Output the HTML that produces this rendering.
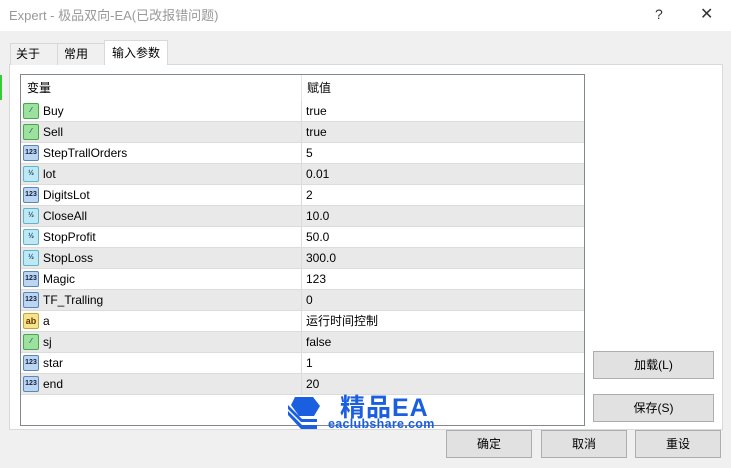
<!DOCTYPE html><html><head><meta charset="utf-8"><style>
*{margin:0;padding:0;box-sizing:border-box}
body{width:731px;height:468px;background:#f0f0f0;font-family:"Liberation Sans","Noto Sans CJK SC",sans-serif;font-size:12px;color:#000;position:relative;overflow:hidden}
.a{position:absolute}
.title{left:0;top:0;width:731px;height:31px;background:#fff;color:#999;font-size:13px;line-height:31px;padding-left:9px}
.tab{top:43px;height:22px;background:#f0f0f0;border:1px solid #d9d9d9;border-bottom:none;line-height:21px;padding-left:5px}
.panel{left:9px;top:64px;width:714px;height:366px;background:#fff;border:1px solid #d9d9d9}
.tbl{left:20px;top:74px;width:565px;height:352px;border:1px solid #828790;background:#fff}
.row{position:absolute;left:0;width:563px;height:21px;border-bottom:1px solid #dcdcdc;line-height:20px}
.row.g{background:#e9e9e9}
.row span{position:absolute}
.n{left:22px}.v{left:285px}
.ic{position:absolute;left:2px;top:2px;width:16px;height:16px;border-radius:2px;font-size:7px;font-weight:bold;line-height:14px;text-align:center}
.i1{background:#9de19f;border:1px solid #4aa54e;color:#156}
.i2{background:#bcd5f0;border:1px solid #5b86b8;color:#124}
.i3{background:#bfe8f5;border:1px solid #5fb3cc;color:#146}
.i4{background:#f4e58c;border:1px solid #c2a63d;color:#630}
.btn{background:#e1e1e1;border:1px solid #adadad;text-align:center;line-height:26px}
</style></head><body>
<div class="a title">Expert - 极品双向-EA(已改报错问题)</div>
<div class="a" style="left:655px;top:6px;color:#333;font-size:14px">?</div>
<div class="a" style="left:700px;top:4px;color:#333;font-size:16px">✕</div>
<div class="a" style="left:0;top:75px;width:2px;height:25px;background:#3c3"></div>
<div class="a panel"></div>
<div class="a tab" style="left:10px;width:48px">关于</div>
<div class="a tab" style="left:57px;width:48px;padding-left:6px">常用</div>
<div class="a tab" style="left:104px;top:40px;height:25px;width:64px;background:#fff;line-height:24px;padding-left:7px">输入参数</div>
<div class="a tbl">
<div class="row" style="top:0;height:26px;line-height:26px;border-bottom:none"><span style="left:6px">变量</span><span style="left:286px">赋值</span></div>
<div style="position:absolute;left:280px;top:0;width:1px;height:26px;background:#e5e5e5"></div>
<div class="row" style="top:26px"><div class="ic i1">⁄</div><span class="n">Buy</span><span class="v">true</span></div>
<div class="row g" style="top:47px"><div class="ic i1">⁄</div><span class="n">Sell</span><span class="v">true</span></div>
<div class="row" style="top:68px"><div class="ic i2">123</div><span class="n">StepTrallOrders</span><span class="v">5</span></div>
<div class="row g" style="top:89px"><div class="ic i3">½</div><span class="n">lot</span><span class="v">0.01</span></div>
<div class="row" style="top:110px"><div class="ic i2">123</div><span class="n">DigitsLot</span><span class="v">2</span></div>
<div class="row g" style="top:131px"><div class="ic i3">½</div><span class="n">CloseAll</span><span class="v">10.0</span></div>
<div class="row" style="top:152px"><div class="ic i3">½</div><span class="n">StopProfit</span><span class="v">50.0</span></div>
<div class="row g" style="top:173px"><div class="ic i3">½</div><span class="n">StopLoss</span><span class="v">300.0</span></div>
<div class="row" style="top:194px"><div class="ic i2">123</div><span class="n">Magic</span><span class="v">123</span></div>
<div class="row g" style="top:215px"><div class="ic i2">123</div><span class="n">TF_Tralling</span><span class="v">0</span></div>
<div class="row" style="top:236px"><div class="ic i4" style="font-size:9px">ab</div><span class="n">a</span><span class="v">运行时间控制</span></div>
<div class="row g" style="top:257px"><div class="ic i1">⁄</div><span class="n">sj</span><span class="v">false</span></div>
<div class="row" style="top:278px"><div class="ic i2">123</div><span class="n">star</span><span class="v">1</span></div>
<div class="row g" style="top:299px"><div class="ic i2">123</div><span class="n">end</span><span class="v">20</span></div>
<div style="position:absolute;left:280px;top:26px;width:1px;height:294px;background:#dcdcdc"></div>
</div>
<div class="a btn" style="left:593px;top:351px;width:121px;height:28px">加载(L)</div>
<div class="a btn" style="left:593px;top:394px;width:121px;height:28px">保存(S)</div>
<div class="a btn" style="left:446px;top:430px;width:86px;height:28px">确定</div>
<div class="a btn" style="left:541px;top:430px;width:86px;height:28px">取消</div>
<div class="a btn" style="left:635px;top:430px;width:86px;height:28px">重设</div>
<svg class="a" style="left:285px;top:395px" width="40" height="36" viewBox="0 0 40 36">
<path d="M3 16 L17 30 L32 30 L32 34 L16 34 L3 20 Z" fill="#1a5fe0"/>
<path d="M3 10 L17 24 L32 24 L32 27 L16 27 L3 14 Z" fill="#1a5fe0"/>
<path d="M10 2 L28 2 L35 11 L29 21 L14 21 L6 10 Z" fill="#1a5fe0"/>
</svg>
<div class="a" style="left:340px;top:388px;font-size:25px;font-weight:bold;color:#1a5fe0;letter-spacing:1px">精品EA</div>
<div class="a" style="left:328px;top:417px;font-size:12.5px;font-weight:bold;color:#1a5fe0;letter-spacing:.3px">eaclubshare.com</div>
</body></html>
